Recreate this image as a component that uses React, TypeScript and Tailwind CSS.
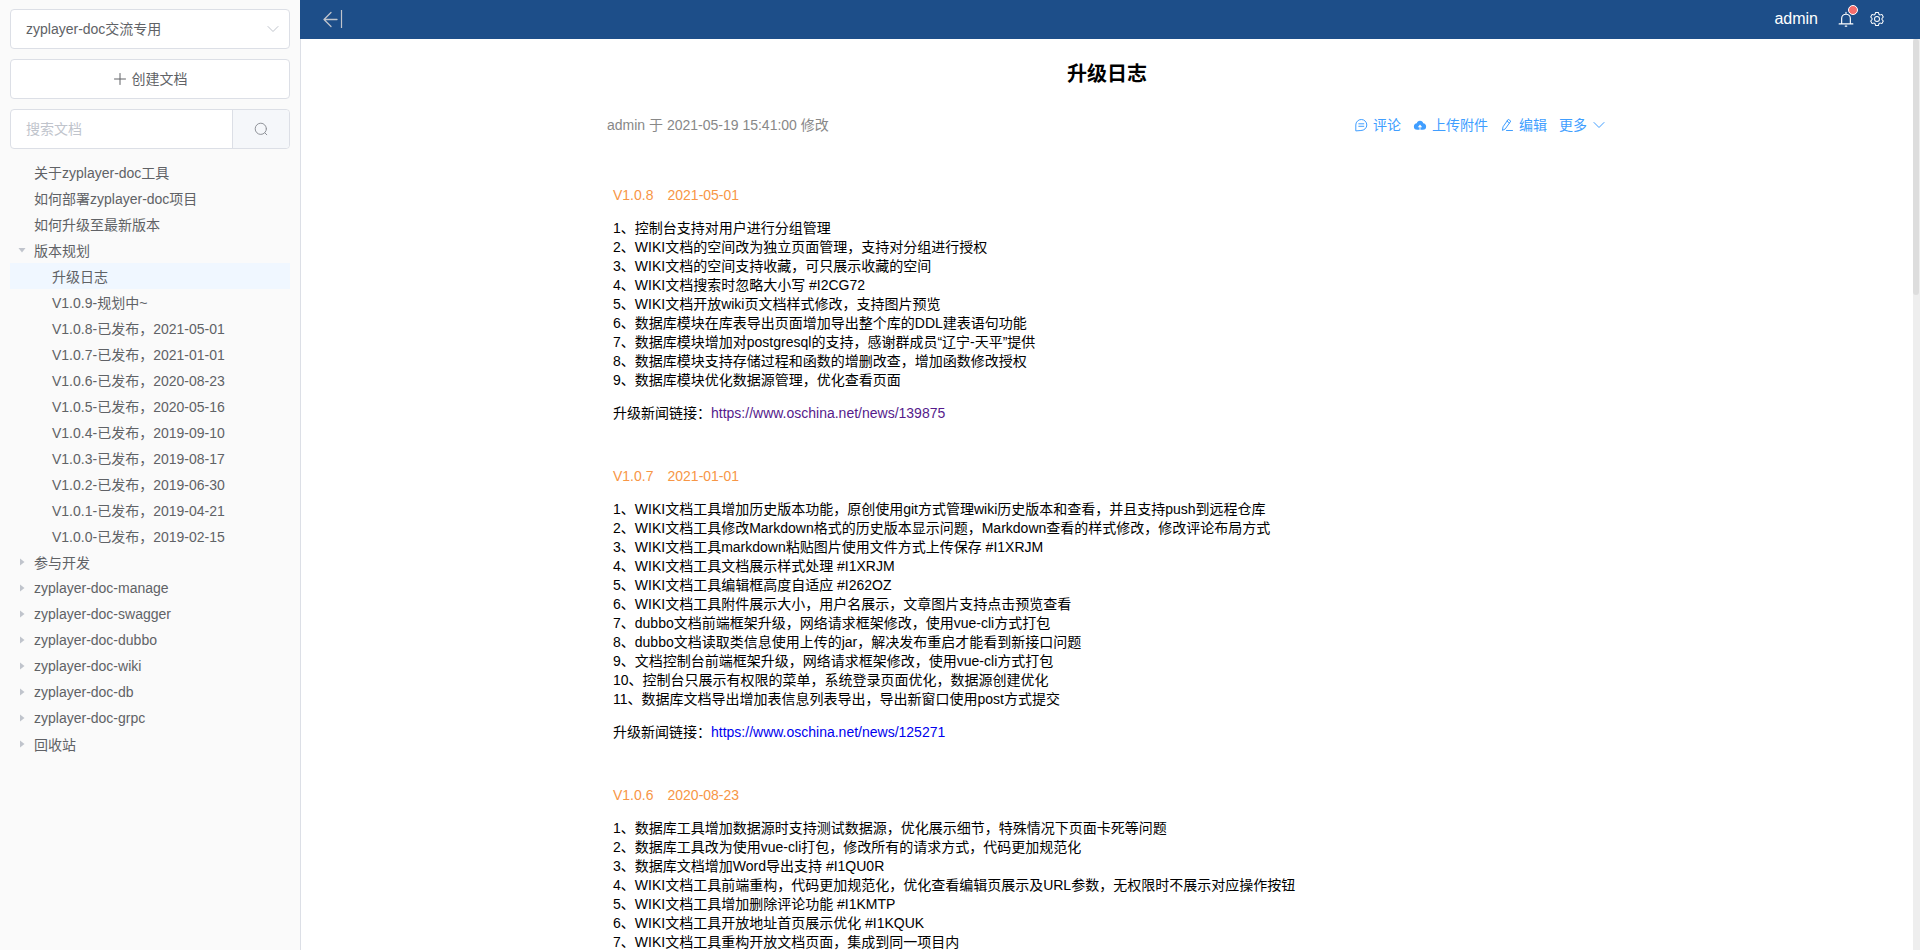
import { ReactNode } from "react";

const tree = [
  { label: "关于zyplayer-doc工具" },
  { label: "如何部署zyplayer-doc项目" },
  { label: "如何升级至最新版本" },
  {
    label: "版本规划",
    children: [
      "升级日志",
      "V1.0.9-规划中~",
      "V1.0.8-已发布，2021-05-01",
      "V1.0.7-已发布，2021-01-01",
      "V1.0.6-已发布，2020-08-23",
      "V1.0.5-已发布，2020-05-16",
      "V1.0.4-已发布，2019-09-10",
      "V1.0.3-已发布，2019-08-17",
      "V1.0.2-已发布，2019-06-30",
      "V1.0.1-已发布，2019-04-21",
      "V1.0.0-已发布，2019-02-15",
    ],
  },
  { label: "参与开发", folder: true },
  { label: "zyplayer-doc-manage", folder: true },
  { label: "zyplayer-doc-swagger", folder: true },
  { label: "zyplayer-doc-dubbo", folder: true },
  { label: "zyplayer-doc-wiki", folder: true },
  { label: "zyplayer-doc-db", folder: true },
  { label: "zyplayer-doc-grpc", folder: true },
  { label: "回收站", folder: true },
];

const releases = [
  {
    version: "V1.0.8",
    date: "2021-05-01",
    link: "https://www.oschina.net/news/139875",
    visited: true,
    items: [
      "控制台支持对用户进行分组管理",
      "WIKI文档的空间改为独立页面管理，支持对分组进行授权",
      "WIKI文档的空间支持收藏，可只展示收藏的空间",
      "WIKI文档搜索时忽略大小写 #I2CG72",
      "WIKI文档开放wiki页文档样式修改，支持图片预览",
      "数据库模块在库表导出页面增加导出整个库的DDL建表语句功能",
      "数据库模块增加对postgresql的支持，感谢群成员“辽宁-天平”提供",
      "数据库模块支持存储过程和函数的增删改查，增加函数修改授权",
      "数据库模块优化数据源管理，优化查看页面",
    ],
  },
  {
    version: "V1.0.7",
    date: "2021-01-01",
    link: "https://www.oschina.net/news/125271",
    items: [
      "WIKI文档工具增加历史版本功能，原创使用git方式管理wiki历史版本和查看，并且支持push到远程仓库",
      "WIKI文档工具修改Markdown格式的历史版本显示问题，Markdown查看的样式修改，修改评论布局方式",
      "WIKI文档工具markdown粘贴图片使用文件方式上传保存 #I1XRJM",
      "WIKI文档工具文档展示样式处理 #I1XRJM",
      "WIKI文档工具编辑框高度自适应 #I262OZ",
      "WIKI文档工具附件展示大小，用户名展示，文章图片支持点击预览查看",
      "dubbo文档前端框架升级，网络请求框架修改，使用vue-cli方式打包",
      "dubbo文档读取类信息使用上传的jar，解决发布重启才能看到新接口问题",
      "文档控制台前端框架升级，网络请求框架修改，使用vue-cli方式打包",
      "控制台只展示有权限的菜单，系统登录页面优化，数据源创建优化",
      "数据库文档导出增加表信息列表导出，导出新窗口使用post方式提交",
    ],
  },
  {
    version: "V1.0.6",
    date: "2020-08-23",
    items: [
      "数据库工具增加数据源时支持测试数据源，优化展示细节，特殊情况下页面卡死等问题",
      "数据库工具改为使用vue-cli打包，修改所有的请求方式，代码更加规范化",
      "数据库文档增加Word导出支持 #I1QU0R",
      "WIKI文档工具前端重构，代码更加规范化，优化查看编辑页展示及URL参数，无权限时不展示对应操作按钮",
      "WIKI文档工具增加删除评论功能 #I1KMTP",
      "WIKI文档工具开放地址首页展示优化 #I1KQUK",
      "WIKI文档工具重构开放文档页面，集成到同一项目内",
    ],
  },
];

function Icon({ className = "size-3.5", children }: { className?: string; children: ReactNode }) {
  return (
    <svg className={`shrink-0 ${className}`} viewBox="0 0 14 14" fill="none" stroke="currentColor" strokeLinecap="round" strokeLinejoin="round" aria-hidden="true">
      {children}
    </svg>
  );
}

function ChevronDown({ className }: { className?: string }) {
  return (
    <Icon className={className}>
      <path d="M2 4.5 7 9.5 12 4.5" />
    </Icon>
  );
}

function Caret({ open }: { open?: boolean }) {
  return (
    <svg className="size-2 shrink-0" viewBox="0 0 8 8" fill="#c0c4cc" aria-hidden="true">
      {open ? <path d="M0.5 2h7L4 6.5z" /> : <path d="M2 0.5v7L6.5 4z" />}
    </svg>
  );
}

function Sidebar() {
  return (
    <aside className="w-[300px] shrink-0 bg-[#fafafa] px-2.5 pt-[9px] text-[#606266]">
      <div className="relative">
        <select aria-label="空间" className="block h-10 w-full appearance-none rounded border border-[#dcdfe6] bg-white px-[15px]">
          <option>zyplayer-doc交流专用</option>
        </select>
        <ChevronDown className="pointer-events-none absolute top-[13px] right-[10px] size-3.5 text-[#c0c4cc]" />
      </div>
      <button className="mt-2.5 flex h-10 w-full items-center justify-center gap-[5px] rounded border border-[#dcdfe6] bg-white">
        <Icon>
          <path d="M7 1.5v11M1.5 7h11" />
        </Icon>
        创建文档
      </button>
      <form className="mt-2.5 flex h-10 rounded border border-[#dcdfe6] bg-white">
        <input
          type="text"
          aria-label="搜索文档"
          placeholder="搜索文档"
          className="min-w-0 flex-1 px-[15px] outline-none placeholder:text-[#c0c4cc]"
        />
        <button type="button" aria-label="搜索" className="flex w-[57px] items-center justify-center rounded-r border-l border-[#dcdfe6] bg-[#f5f7fa] text-[#909399]">
          <Icon>
            <circle cx="6.8" cy="6.8" r="5.6" />
            <path d="m10.800 10.800 2 2" />
          </Icon>
        </button>
      </form>
      <ul className="mt-2.5 leading-normal">
        {tree.map((node) => (
          <li key={node.label}>
            <div className="flex h-[26px] items-center">
              <div className="flex w-6 justify-center">
                {(node.folder || node.children) && <Caret open={!!node.children} />}
              </div>
              <span className="leading-[normal]">{node.label}</span>
            </div>
            {node.children && (
              <ul>
                {node.children.map((child, i) => (
                  <li key={child} className={i === 0 ? "flex h-[26px] items-center bg-[#f0f7ff] pl-[42px]" : "flex h-[26px] items-center pl-[42px]"}>
                    <span className="leading-[normal]">{child}</span>
                  </li>
                ))}
              </ul>
            )}
          </li>
        ))}
      </ul>
    </aside>
  );
}

function Header() {
  return (
    <header className="flex h-[39px] shrink-0 items-center justify-between bg-[#1d4e89] pr-[35px] pb-px pl-[22px] text-white">
      <button aria-label="收起侧栏" className="text-[#c0c4cc]">
        <svg className="h-5 w-[21px]" viewBox="0 0 21 20" fill="none" stroke="currentColor" strokeLinecap="round" strokeLinejoin="round">
          <path d="M15 10.500H2M9 3.500l-7 7 7 7" strokeWidth="1.3" />
          <path d="M19.500 1v18" strokeWidth="1.2" strokeLinecap="butt" />
        </svg>
      </button>
      <div className="flex items-center">
        <button className="text-base">admin</button>
        <button aria-label="消息" className="relative ml-5">
          <Icon className="size-4">
            <path d="M3.200 11V6.600a3.800 3.800 0 0 1 7.600 0V11M1 11.300h12M7 1.200v1.200M6.300 13.200h1.400" />
          </Icon>
          <span className="absolute -top-1.5 -right-1 size-2.5 rounded-full border border-white bg-[#f56c6c]" />
        </button>
        <button aria-label="设置" className="ml-[15px]">
          <svg className="size-4" viewBox="0 0 1024 1024" fill="currentColor" aria-hidden="true">
            <path d="M600.704 64a32 32 0 0 1 30.464 22.208l35.2 109.376c14.784 7.232 28.928 15.36 42.432 24.512l112.384-24.192a32 32 0 0 1 34.432 15.36L944.32 364.8a32 32 0 0 1-4.032 37.504l-77.12 85.12a357.12 357.12 0 0 1 0 49.024l77.12 85.248a32 32 0 0 1 4.032 37.504l-88.704 153.6a32 32 0 0 1-34.432 15.296L708.8 803.904c-13.44 9.088-27.648 17.28-42.368 24.512l-35.264 109.376A32 32 0 0 1 600.704 960H423.296a32 32 0 0 1-30.464-22.208L357.696 828.48a351.616 351.616 0 0 1-42.56-24.64l-112.32 24.256a32 32 0 0 1-34.432-15.36L79.68 659.2a32 32 0 0 1 4.032-37.504l77.12-85.248a357.12 357.12 0 0 1 0-48.896l-77.12-85.248A32 32 0 0 1 79.68 364.8l88.704-153.6a32 32 0 0 1 34.432-15.296l112.32 24.256c13.568-9.152 27.776-17.408 42.56-24.64l35.2-109.312A32 32 0 0 1 423.232 64H600.64zm-23.424 64H446.72l-36.352 113.088-24.512 11.968a294.113 294.113 0 0 0-34.816 20.096l-22.656 15.36-116.224-25.088-65.28 113.152 79.68 88.192-1.92 27.136a293.12 293.12 0 0 0 0 40.192l1.92 27.136-79.808 88.192 65.344 113.152 116.224-25.024 22.656 15.296a294.113 294.113 0 0 0 34.816 20.096l24.512 11.968L446.72 896h130.688l36.48-113.152 24.448-11.904a288.282 288.282 0 0 0 34.752-20.096l22.592-15.296 116.288 25.024 65.28-113.152-79.744-88.192 1.92-27.136a293.12 293.12 0 0 0 0-40.256l-1.92-27.136 79.808-88.128-65.344-113.152-116.288 24.96-22.592-15.232a287.616 287.616 0 0 0-34.752-20.096l-24.448-11.904L577.344 128zM512 320a192 192 0 1 1 0 384 192 192 0 0 1 0-384zm0 64a128 128 0 1 0 0 256 128 128 0 0 0 0-256z" />
          </svg>
        </button>
      </div>
    </header>
  );
}

function Toolbar() {
  return (
    <div className="flex gap-3 pr-px text-[#409eff]">
      <button className="flex items-center gap-[5px]">
        <Icon>
          <path d="M1.800 12.500V7A5.500 5.500 0 1 1 7.300 12.500zM4.800 5.800h5M4.800 8.300h5" />
        </Icon>
        评论
      </button>
      <button className="flex items-center gap-[5px]">
        <svg className="size-3.5" viewBox="0 0 1024 1024" fill="currentColor" aria-hidden="true">
          <path d="M544 864V672h128L512 480 352 672h128v192H320v-1.600c-5.376.320-10.496 1.600-16 1.600A240 240 0 0 1 64 624c0-123.136 93.120-223.488 212.608-237.248A239.808 239.808 0 0 1 512 192a239.872 239.872 0 0 1 235.456 194.752c119.488 13.760 212.480 114.112 212.480 237.248a240 240 0 0 1-240 240c-5.376 0-10.560-1.280-16-1.600v1.600H544z" />
        </svg>
        上传附件
      </button>
      <button className="flex items-center gap-[5px]">
        <Icon>
          <path d="M2.500 12 3 8.800 8.300 1.300 10.800 3.100 5.500 10.600zM7 3.200 9.500 5M6.500 12.500h6" />
        </Icon>
        编辑
      </button>
      <button className="flex items-center gap-[5px]">
        更多
        <ChevronDown />
      </button>
    </div>
  );
}

export default function App() {
  return (
    <div className="flex h-screen overflow-hidden bg-white font-['Liberation_Sans','Noto_Sans_CJK_SC',sans-serif] text-sm">
      <Sidebar />
      <div className="flex min-w-0 flex-1 flex-col">
        <Header />
        <div className="flex min-h-0 flex-1 border-l border-[#dcdfe6]">
          <main className="min-w-0 flex-1 overflow-hidden text-black">
            <article className="mx-auto max-w-[1000px] pt-[21px]">
              <h1 className="text-center text-xl font-bold">升级日志</h1>
              <div className="mt-[17px] flex h-10 items-center justify-between">
                <span className="text-[#888]">admin 于 2021-05-19 15:41:00 修改</span>
                <Toolbar />
              </div>
              <div className="mt-[41px] px-1.5 leading-[19px]">
                {releases.map((release) => (
                  <section key={release.version} className="mb-11">
                    <h2 className="mb-3.5 flex gap-3.5 text-[#f79646]">
                      <span>{release.version}</span>
                      <span>{release.date}</span>
                    </h2>
                    {release.items.map((item, i) => (
                      <p key={item}>
                        {i + 1}、{item}
                      </p>
                    ))}
                    {release.link && (
                      <p className="mt-3.5">
                        升级新闻链接：
                        <a href={release.link} className={release.visited ? "text-[#551a8b]" : "text-[#0000ee]"}>
                          {release.link}
                        </a>
                      </p>
                    )}
                  </section>
                ))}
              </div>
            </article>
          </main>
          <div className="w-[7px] shrink-0 bg-[#eee]">
            <div className="h-64 w-1.5 rounded-full bg-[#ddd]" />
          </div>
        </div>
      </div>
    </div>
  );
}
